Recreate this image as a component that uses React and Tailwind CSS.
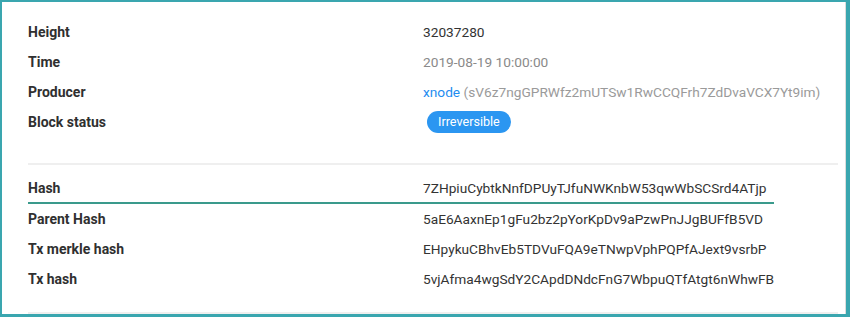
import React from "react";

const font = { fontFamily: "Roboto, 'Liberation Sans', sans-serif" };

function Row({ label, children, underline }) {
  return (
    <div className={"flex items-center h-[30px] " + (underline ? "w-[746px] border-b-2 border-[#3a9a8c]" : "")}>
      <div className="w-[395px] shrink-0 text-[14px] font-bold text-[#303030]">{label}</div>
      <div className="text-[13.7px]">{children}</div>
    </div>
  );
}

export default function App() {
  return (
    <div className="w-[850px] h-[317px] bg-white border-t-2 border-l-2 border-r-4 border-b-[3px] border-[#3aa6af] overflow-hidden" style={font}>
      <div className="h-full border-r border-[#dcdcdc] pl-[26px] pr-[7px] pt-[15px]">
        <Row label="Height"><span className="text-[#333]">32037280</span></Row>
        <Row label="Time"><span className="text-[#8a8a8a]">2019-08-19 10:00:00</span></Row>
        <Row label="Producer">
          <span className="text-[#1e8cf0]">xnode</span>{" "}
          <span className="text-[#9a9a9a]">(sV6z7ngGPRWfz2mUTSw1RwCCQFrh7ZdDvaVCX7Yt9im)</span>
        </Row>
        <Row label="Block status">
          <span className="inline-flex items-center h-[22px] px-[11px] ml-[4px] rounded-full bg-[#2b96f1] text-white text-[12.6px]">Irreversible</span>
        </Row>
        <div className="mt-[26px] h-[2px] bg-[#efefef]" />
        <div className="mt-[9px]">
          <Row label="Hash" underline><span className="text-[#333]">7ZHpiuCybtkNnfDPUyTJfuNWKnbW53qwWbSCSrd4ATjp</span></Row>
          <Row label="Parent Hash"><span className="text-[#333]">5aE6AaxnEp1gFu2bz2pYorKpDv9aPzwPnJJgBUFfB5VD</span></Row>
          <Row label="Tx merkle hash"><span className="text-[#333]">EHpykuCBhvEb5TDVuFQA9eTNwpVphPQPfAJext9vsrbP</span></Row>
          <Row label="Tx hash"><span className="text-[#333]">5vjAfma4wgSdY2CApdDNdcFnG7WbpuQTfAtgt6nWhwFB</span></Row>
        </div>
        <div className="mt-[18px] h-[2px] bg-[#efefef]" />
      </div>
    </div>
  );
}
